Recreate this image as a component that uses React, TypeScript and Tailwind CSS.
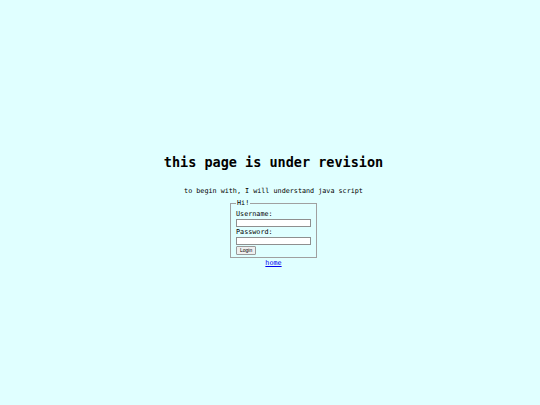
import React from 'react';

const mono = { fontFamily: '"DejaVu Sans Mono", monospace' };

export default function App() {
  return (
    <div className="w-[540px] h-[405px] bg-[#e0ffff] flex flex-col items-center pl-[7px] text-black" style={mono}>
      <h1 className="mt-[152px] text-[13.5px] leading-[20px] font-bold">this page is under revision</h1>
      <p className="mt-[15px] text-[6.75px] leading-[9px]">to begin with, I will understand java script</p>
      <form className="mt-[3px] flex flex-col items-center">
        <fieldset className="border border-[#a0a0a0] w-[87px] px-[5px] pb-[2px] text-[6.75px] leading-[8px]">
          <legend className="px-[1px]">Hi!</legend>
          <div className="flex flex-col items-start">
            <label className="mt-[3px]">Username:</label>
            <input className="mt-[1px] w-[75px] h-[8px] bg-white border border-[#8f8f8f]" />
            <label className="mt-[1px]">Password:</label>
            <input type="password" className="mt-[1px] w-[75px] h-[8px] bg-white border border-[#8f8f8f]" />
            <button type="button" className="mt-[1px] h-[9px] px-[3px] text-[5px] leading-[7px] bg-[#efefef] border border-[#999] rounded-[1px]" style={{ fontFamily: '"Liberation Sans", sans-serif' }}>Login</button>
          </div>
        </fieldset>
        <a href="#" className="mt-[1px] text-[6.75px] leading-[8px] text-[#0000ee] underline">home</a>
      </form>
    </div>
  );
}
